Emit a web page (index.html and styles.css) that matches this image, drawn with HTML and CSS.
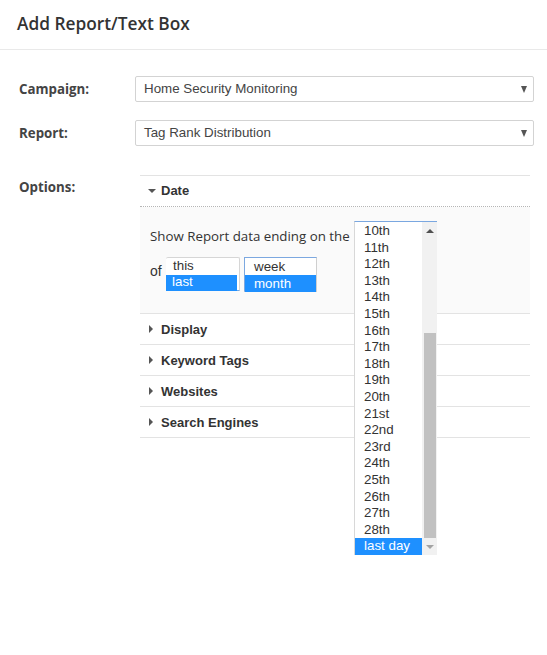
FILE: index.html
```html
<!DOCTYPE html>
<html>
<head>
<meta charset="utf-8">
<link rel="stylesheet" href="styles.css">
</head>
<body>
<header class="modal-header">
  <h1 class="modal-title">Add Report/Text Box</h1>
</header>
<div class="modal-body">
  <div class="form-row">
    <div class="form-label">Campaign:</div>
    <div class="select"><span>Home Security Monitoring</span><span class="caret"></span></div>
  </div>
  <div class="form-row">
    <div class="form-label">Report:</div>
    <div class="select"><span>Tag Rank Distribution</span><span class="caret"></span></div>
  </div>
  <div class="form-row options-row">
    <div class="form-label options-label">Options:</div>
    <div class="accordion">
      <div class="acc-item open">
        <div class="acc-head"><span class="tri tri-down"></span>Date</div>
        <div class="acc-body">
          <div class="date-line">Show Report data ending on the</div>
          <div class="of-line">
            <span class="of">of</span>
            <div class="listbox lb-this">
              <div class="opt">this</div>
              <div class="opt sel">last</div>
            </div>
            <div class="listbox lb-week">
              <div class="opt">week</div>
              <div class="opt sel">month</div>
            </div>
          </div>
          <div class="popup">
            <div class="popup-list">
              <div class="p-opt">10th</div>
              <div class="p-opt">11th</div>
              <div class="p-opt">12th</div>
              <div class="p-opt">13th</div>
              <div class="p-opt">14th</div>
              <div class="p-opt">15th</div>
              <div class="p-opt">16th</div>
              <div class="p-opt">17th</div>
              <div class="p-opt">18th</div>
              <div class="p-opt">19th</div>
              <div class="p-opt">20th</div>
              <div class="p-opt">21st</div>
              <div class="p-opt">22nd</div>
              <div class="p-opt">23rd</div>
              <div class="p-opt">24th</div>
              <div class="p-opt">25th</div>
              <div class="p-opt">26th</div>
              <div class="p-opt">27th</div>
              <div class="p-opt">28th</div>
              <div class="p-opt sel">last day</div>
            </div>
            <div class="scrollbar">
              <div class="sb-up"></div>
              <div class="sb-track"><div class="sb-thumb"></div></div>
              <div class="sb-down"></div>
            </div>
          </div>
        </div>
      </div>
      <div class="acc-item"><div class="acc-head"><span class="tri tri-right"></span>Display</div></div>
      <div class="acc-item"><div class="acc-head"><span class="tri tri-right"></span>Keyword Tags</div></div>
      <div class="acc-item"><div class="acc-head"><span class="tri tri-right"></span>Websites</div></div>
      <div class="acc-item"><div class="acc-head"><span class="tri tri-right"></span>Search Engines</div></div>
    </div>
  </div>
</div>
</body>
</html>
```

FILE: styles.css
```css
* { box-sizing: border-box; }
html, body { margin: 0; padding: 0; background: #fff; }
body { font-family: "Open Sans", "Liberation Sans", sans-serif; color: #333; width: 547px; height: 655px; overflow: hidden; }

.modal-header {
  height: 50px;
  border-bottom: 1px solid #e9e9e9;
  padding: 0 17px;
  display: flex;
  align-items: center;
}
.modal-title {
  margin: 0;
  font-size: 17.3px;
  font-weight: 600;
  color: #333;
  line-height: 20px;
  padding-bottom: 1px;
}

.modal-body {
  padding: 26px 13px 0 19px;
  display: flex;
  flex-direction: column;
  gap: 18px;
}
.form-row {
  display: grid;
  grid-template-columns: 116px 1fr;
  align-items: center;
}
.form-label {
  font-size: 13.3px;
  font-weight: 700;
  color: #444;
  line-height: 18px;
}
.select {
  height: 26px;
  border: 1px solid #d3d3d3;
  border-radius: 2px;
  display: flex;
  align-items: center;
  justify-content: space-between;
  padding: 0 6px 1px 8px;
  font-family: "Liberation Sans", Arial, sans-serif;
  font-size: 13.35px;
  color: #444;
}
.caret {
  width: 0; height: 0;
  border-left: 3.5px solid transparent;
  border-right: 3.5px solid transparent;
  border-top: 7px solid #555;
  margin-top: 1px;
}

.options-row {
  align-items: start;
  margin-top: 11px;
}
.options-label { padding-top: 3px; }

.accordion {
  margin: 0 4px 0 5px;
  border-top: 1px solid #e3e3e3;
}
.acc-item { border-bottom: 1px solid #e3e3e3; }
.acc-head {
  height: 30px;
  display: flex;
  align-items: center;
  padding-left: 8px;
  font-family: "Liberation Sans", Arial, sans-serif;
  font-size: 13px;
  font-weight: 700;
  color: #333;
}
.acc-item.open .acc-head { border-bottom: 1px dotted #b5b5b5; height: 31px; padding-bottom: 1px; }
.tri { display: inline-block; width: 0; height: 0; }
.tri-down {
  border-left: 4px solid transparent;
  border-right: 4px solid transparent;
  border-top: 4px solid #555;
  margin-right: 5px;
}
.tri-right {
  border-top: 4px solid transparent;
  border-bottom: 4px solid transparent;
  border-left: 4px solid #555;
  margin-right: 8px;
  margin-left: 1px;
}

.acc-body {
  position: relative;
  height: 106px;
  background: #fafafa;
  padding: 20px 0 0 10px;
}
.date-line {
  font-size: 13.3px;
  line-height: 18px;
  color: #333;
}
.of-line {
  display: flex;
  align-items: flex-start;
  margin-top: 12px;
  font-size: 13px;
  color: #333;
}
.of {
  width: 16px;
  font-family: "Liberation Sans", Arial, sans-serif;
  font-size: 14px;
  line-height: 16px;
  padding-top: 6px;
}
.listbox {
  height: 34px;
  background: #fff;
  font-family: "Liberation Sans", Arial, sans-serif;
  font-size: 13.35px;
  color: #333;
  padding-top: 1px;
}
.lb-this {
  width: 74px;
  border: 1px solid #d6d6d6;
  border-left: none;
  border-bottom: 1px solid #6fa7e6;
  border-radius: 2px 2px 0 0;
  margin-right: 4px;
}
.lb-this .opt { padding-left: 7px; width: 71px; height: 16px; line-height: 14px; }
.lb-this .opt.sel { padding-left: 6px; }
.lb-week {
  width: 73px;
  border: 1px solid #cfcfcf;
  border-top: 1px solid #7ca8e0;
  border-left: 1px solid #7ca8e0;
  padding-top: 0;
  height: 35px;
}
.lb-week .opt { padding-left: 9px; height: 17px; line-height: 17px; }
.opt.sel { background: #1e90ff; color: #fff; }

.popup {
  position: absolute;
  left: 214px;
  top: 14px;
  width: 83px;
  height: 334px;
  background: #fff;
  border-top: 1px solid #7aa7e0;
  border-left: 1px solid #d8d8d8;
  display: flex;
  font-family: "Liberation Sans", Arial, sans-serif;
  font-size: 13.35px;
  color: #333;
}
.popup-list { flex: 1; padding-top: 1px; }
.p-opt { height: 16.6px; line-height: 16.6px; padding-left: 9px; }
.p-opt.sel { background: #1e90ff; color: #fff; }
.scrollbar {
  width: 15px;
  background: #f1f1f1;
  display: flex;
  flex-direction: column;
}
.sb-up, .sb-down {
  height: 17px;
  display: flex;
  align-items: center;
  justify-content: center;
}
.sb-up::after {
  content: "";
  border-left: 4px solid transparent;
  border-right: 4px solid transparent;
  border-bottom: 4px solid #505050;
}
.sb-down::after {
  content: "";
  border-left: 4px solid transparent;
  border-right: 4px solid transparent;
  border-top: 4px solid #a3a3a3;
}
.sb-track { flex: 1; display: flex; flex-direction: column; justify-content: flex-end; padding: 0 1px 0 2px; }
.sb-thumb { height: 205px; background: #c1c1c1; }
```
